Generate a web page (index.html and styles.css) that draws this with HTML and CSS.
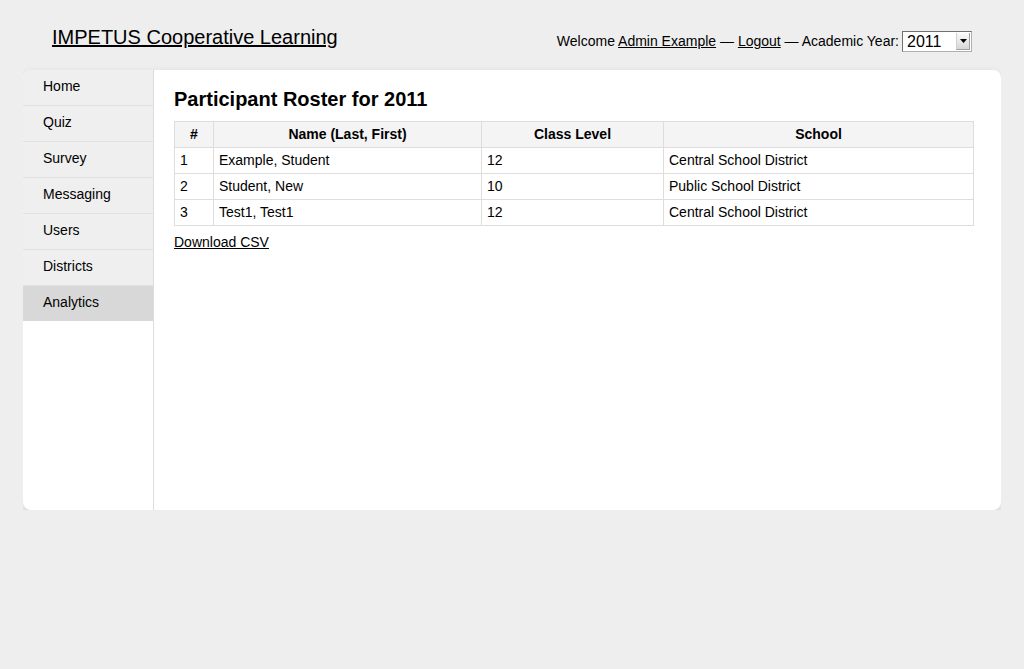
FILE: index.html
```html
<!DOCTYPE html>
<html>
<head>
<meta charset="utf-8">
<title>IMPETUS Cooperative Learning</title>
<link rel="stylesheet" href="styles.css">
</head>
<body>
<header class="top">
  <a class="brand" href="#">IMPETUS Cooperative Learning</a>
  <div class="account">
    <span>Welcome <a href="#">Admin Example</a> — <a href="#">Logout</a> — Academic Year:</span>
    <div class="year-select">
      <span class="year-value">2011</span>
      <span class="year-arrow"><svg width="7" height="4" viewBox="0 0 7 4"><path d="M0 0 H7 L3.5 4 Z" fill="#000"/></svg></span>
    </div>
  </div>
</header>
<div class="card">
  <nav class="sidebar">
    <a class="nav-item" href="#">Home</a>
    <a class="nav-item" href="#">Quiz</a>
    <a class="nav-item" href="#">Survey</a>
    <a class="nav-item" href="#">Messaging</a>
    <a class="nav-item" href="#">Users</a>
    <a class="nav-item" href="#">Districts</a>
    <a class="nav-item active" href="#">Analytics</a>
  </nav>
  <main class="content">
    <h1 class="title">Participant Roster for 2011</h1>
    <table class="roster">
      <thead>
        <tr><th class="c-num">#</th><th class="c-name">Name (Last, First)</th><th class="c-class">Class Level</th><th class="c-school">School</th></tr>
      </thead>
      <tbody>
        <tr><td>1</td><td>Example, Student</td><td>12</td><td>Central School District</td></tr>
        <tr><td>2</td><td>Student, New</td><td>10</td><td>Public School District</td></tr>
        <tr><td>3</td><td>Test1, Test1</td><td>12</td><td>Central School District</td></tr>
      </tbody>
    </table>
    <p class="download"><a href="#">Download CSV</a></p>
  </main>
</div>
</body>
</html>
```
FILE: styles.css
```css
html, body {
  background: #eeeeee;
}
body {
  margin: 0 23px;
  font-family: "Liberation Sans", Arial, Helvetica, sans-serif;
  font-size: 14px;
  color: #000;
}
a {
  color: #000;
  text-decoration: underline;
}
.top {
  height: 70px;
  box-sizing: border-box;
  display: flex;
  justify-content: space-between;
  align-items: flex-start;
  padding: 0 29px;
}
.brand {
  font-size: 20px;
  line-height: 23px;
  margin-top: 26px;
}
.account {
  margin-top: 31px;
  display: flex;
  align-items: center;
  gap: 3px;
  line-height: 17px;
}
.year-select {
  width: 68px;
  height: 19px;
  border: 1px solid #8a8a8a;
  border-top-color: #6f6f6f;
  border-left-color: #6f6f6f;
  border-right-color: #b0b0b0;
  border-bottom-color: #b0b0b0;
  background: #fff;
  display: flex;
  align-items: center;
  justify-content: space-between;
}
.year-value {
  font-size: 16px;
  line-height: 19px;
  padding-left: 4px;
}
.year-arrow {
  width: 12px;
  height: 16px;
  margin-right: 1px;
  background: linear-gradient(#fbfbfb, #d6d6d6);
  border-left: 1px solid #d0d0d0;
  border-bottom: 1px solid #a0a0a0;
  border-right: 1px solid #a0a0a0;
  display: flex;
  align-items: center;
  justify-content: center;
}
.card {
  height: 440px;
  background: #fff;
  border-radius: 8px;
  overflow: hidden;
  display: flex;
  box-shadow: 0 3px 8px rgba(0, 0, 0, 0.12);
}
.sidebar {
  width: 130px;
  flex: none;
  border-right: 1px solid #dddddd;
  display: flex;
  flex-direction: column;
}
.nav-item {
  display: block;
  text-decoration: none;
  background: #efefef;
  padding: 0 20px 2px;
  line-height: 33px;
  border-bottom: 1px solid #e0e0e0;
}
.nav-item.active {
  background: #d8d8d8;
  border-bottom: none;
}
.content {
  flex: 1;
  padding: 18px 20px;
}
.title {
  margin: 0 0 10px;
  font-size: 20px;
  line-height: 23px;
  font-weight: bold;
}
.roster {
  width: 800px;
  border-collapse: collapse;
  table-layout: fixed;
}
.roster th, .roster td {
  border: 1px solid #dddddd;
  padding: 0 5px 1px;
  height: 24px;
  line-height: 24px;
  text-align: left;
  font-size: 14px;
}
.roster th {
  background: #f4f4f4;
  text-align: center;
  font-weight: bold;
}
.c-num { width: 28px; }
.c-name { width: 257px; }
.c-class { width: 171px; }
.c-school { width: auto; }
.download {
  margin: 8px 0 0;
  line-height: 17px;
}
```
